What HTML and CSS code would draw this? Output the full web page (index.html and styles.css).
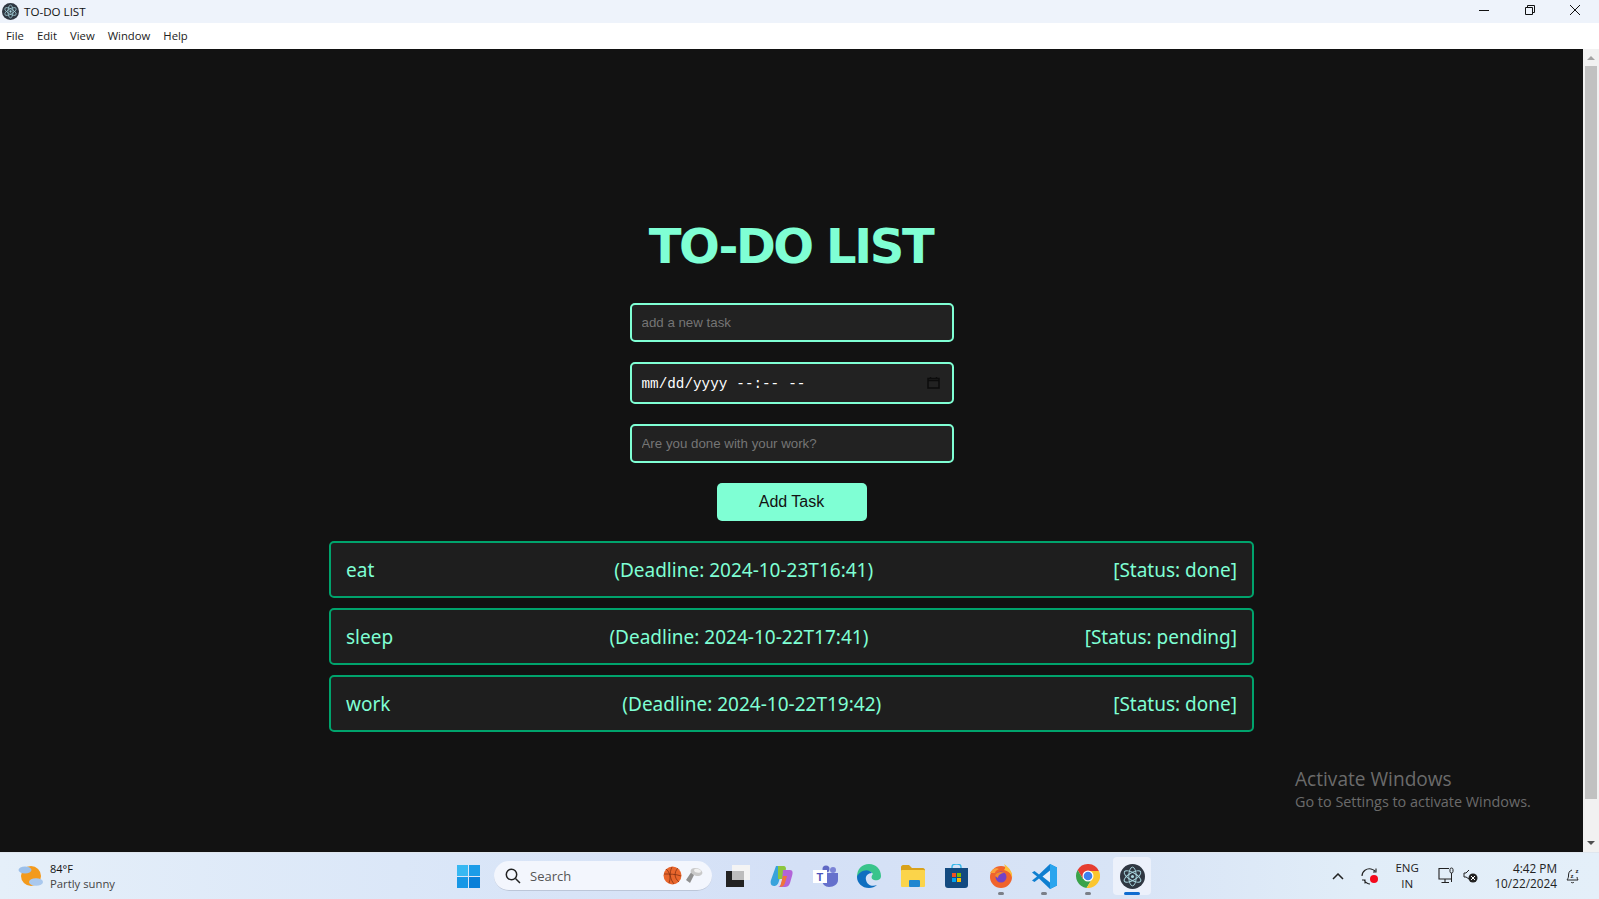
FILE: index.html
```html
<!DOCTYPE html>
<html lang="en">

<head>
    <meta charset="UTF-8">
    <title>TO-DO LIST</title>
    <link rel="stylesheet" href="styles.css">
</head>

<body>
    <div class="title-bar">
        <svg class="app-icon" width="17" height="17" viewBox="0 0 24 24">
            <circle cx="12" cy="12" r="12" fill="#2f3742"/>
            <g fill="none" stroke="#a9d6df" stroke-width="1">
                <ellipse cx="12" cy="12" rx="9" ry="3.6" transform="rotate(30 12 12)"/>
                <ellipse cx="12" cy="12" rx="9" ry="3.6" transform="rotate(90 12 12)"/>
                <ellipse cx="12" cy="12" rx="9" ry="3.6" transform="rotate(150 12 12)"/>
            </g>
            <circle cx="12" cy="12" r="1.6" fill="#a9d6df"/>
        </svg>
        <span class="window-title">TO-DO LIST</span>
        <div class="window-controls">
            <svg width="12" height="12" viewBox="0 0 12 12"><path d="M1 6.500H11" stroke="#111" fill="none"/></svg>
            <svg width="12" height="12" viewBox="0 0 12 12"><path d="M1.500 3.500H8.500V10.500H1.500ZM3.500 3V1.500H10.500V8.500H9" stroke="#111" fill="none"/></svg>
            <svg width="12" height="12" viewBox="0 0 12 12"><path d="M1 1L11 11M11 1L1 11" stroke="#111" fill="none"/></svg>
        </div>
    </div>

    <div class="menu-bar">
        <span>File</span>
        <span>Edit</span>
        <span>View</span>
        <span>Window</span>
        <span>Help</span>
    </div>

    <div class="window-body">
        <main class="content">
            <h1>TO-DO LIST</h1>
            <form class="task-form">
                <input type="text" class="field" placeholder="add a new task">
                <div class="field date-field">
                    <span>mm/dd/yyyy</span>
                    <span>--:--</span>
                    <span>--</span>
                    <svg class="calendar" width="13" height="13" viewBox="0 0 13 13">
                        <path d="M1 2.500H12V12H1ZM1 4.500H12M3.500 1V2.500M9.500 1V2.500" fill="none" stroke="#0c0c0c" stroke-width="1.500"/>
                    </svg>
                </div>
                <input type="text" class="field" placeholder="Are you done with your work?">
                <button type="button" class="add-button">Add Task</button>
            </form>
            <ul class="task-list">
                <li class="task"><span>eat</span><span>(Deadline: 2024-10-23T16:41)</span><span>[Status: done]</span></li>
                <li class="task"><span>sleep</span><span>(Deadline: 2024-10-22T17:41)</span><span>[Status: pending]</span></li>
                <li class="task"><span>work</span><span>(Deadline: 2024-10-22T19:42)</span><span>[Status: done]</span></li>
            </ul>
        </main>

        <div class="scrollbar">
            <div class="arrow-up"></div>
            <div class="thumb"></div>
            <div class="arrow-down"></div>
        </div>

        <div class="activate">
            <div class="activate-title">Activate Windows</div>
            <div class="activate-text">Go to Settings to activate Windows.</div>
        </div>
    </div>

    <footer class="taskbar">
        <div class="weather">
            <svg width="26" height="24" viewBox="0 0 26 24">
                <circle cx="13" cy="12" r="10" fill="#f39a1c"/>
                <ellipse cx="7" cy="6" rx="6.500" ry="3.500" fill="#9cc0ea"/>
                <ellipse cx="18" cy="18" rx="7" ry="3.800" fill="#a9c8ee"/>
            </svg>
            <div class="weather-text">
                <div class="temp">84°F</div>
                <div class="sky">Partly sunny</div>
            </div>
        </div>

        <div class="start-area">
            <svg class="start" width="23" height="23" viewBox="0 0 23 23">
                <rect width="11" height="11" fill="#37b8f2"/>
                <rect x="12" width="11" height="11" fill="#1b9ce8"/>
                <rect y="12" width="11" height="11" fill="#1797e6"/>
                <rect x="12" y="12" width="11" height="11" fill="#0a7fd8"/>
            </svg>
            <div class="search">
                <svg width="16" height="16" viewBox="0 0 16 16"><circle cx="6.500" cy="6.500" r="5.200" fill="none" stroke="#222" stroke-width="1.500"/><path d="M10.500 10.500L15 15" stroke="#222" stroke-width="1.500"/></svg>
                <span class="search-label">Search</span>
                <svg class="ball" width="19" height="19" viewBox="0 0 19 19">
                    <circle cx="9.500" cy="9.500" r="9" fill="#e9662c"/>
                    <path d="M1 8C6 8 13 8 18 10M9 1C6 7 7 13 11 18M3 3C7 6 8 12 6 17M15 2C11 6 11 12 16 16" fill="none" stroke="#7a2c10" stroke-width=".7"/>
                </svg>
                <svg class="buds" width="18" height="17" viewBox="0 0 18 17">
                    <path d="M1 13L7 4L10 6L5 16Z" fill="#8f8f8f"/>
                    <ellipse cx="11.500" cy="5" rx="6" ry="3.800" transform="rotate(15 11.500 5)" fill="#c9c9c9"/>
                    <ellipse cx="12.500" cy="3.800" rx="3.500" ry="1.800" transform="rotate(15 12.500 3.800)" fill="#f0f0f0"/>
                </svg>
            </div>
        </div>

        <div class="apps">
            <div class="app">
                <svg width="24" height="22" viewBox="0 0 24 22">
                    <rect x="6" width="18" height="15" fill="#f4f4f4"/>
                    <rect y="6" width="18" height="16" fill="#222"/>
                    <rect x="6" y="6" width="12" height="9" fill="#bdbdbd"/>
                </svg>
            </div>
            <div class="app">
                <svg width="23" height="23" viewBox="0 0 23 23">
                    <path d="M6 1H13L9 16C8 20 6 21 4 21C1 21 0 18 1 15Z" fill="#38a3dc"/>
                    <path d="M8 1H14C15 1 16 2 16 4L13 14H8Z" fill="#8cc63f"/>
                    <path d="M13 5H20C23 5 23 8 22 11L20 18C19 21 17 22 15 22H7C10 22 11 20 12 16Z" fill="#b264d8"/>
                    <path d="M10 22L13 11H17L15 18C14 21 12 22 10 22Z" fill="#f0753a"/>
                </svg>
            </div>
            <div class="app">
                <svg width="25" height="22" viewBox="0 0 25 22">
                    <circle cx="20" cy="5" r="3" fill="#7b83d6"/>
                    <circle cx="13" cy="4" r="3.500" fill="#5f68c4"/>
                    <path d="M9 8H25V15C25 19 21 22 16 22C12 22 9 19 9 15Z" fill="#6570cc"/>
                    <rect y="5" width="14" height="13" fill="#fff"/>
                    <text class="teams-t" x="3.500" y="15.500">T</text>
                </svg>
            </div>
            <div class="app">
                <svg width="24" height="24" viewBox="0 0 24 24">
                    <path d="M12 0C19 0 24 5 24 12C24 16 20 17 17 16C14 15 14 12 16 10C14 7 10 6 7 8C3 10 1 13 0 13C0 5 5 0 12 0Z" fill="#39c48b"/>
                    <path d="M0 13C0 19 5 24 12 24C15 24 18 23 20 21C15 23 10 21 9 16C8 12 11 9 15 9C12 5 7 6 4 8C1 10 0 12 0 13Z" fill="#0f6fc0"/>
                </svg>
            </div>
            <div class="app">
                <svg width="24" height="22" viewBox="0 0 24 22">
                    <path d="M0 2C0 1 1 0 2 0H8L11 3H22C23 3 24 4 24 5V8H0Z" fill="#d9a21a"/>
                    <rect y="5" width="24" height="17" rx="1" fill="#fbd44a"/>
                    <rect x="8" y="15" width="11" height="7" rx="1" fill="#1f86d0"/>
                </svg>
            </div>
            <div class="app">
                <svg width="23" height="24" viewBox="0 0 23 24">
                    <path d="M7 5V3C7 1 9 0 11 0H12C14 0 16 1 16 3V5" fill="none" stroke="#35b8ea" stroke-width="1.400"/>
                    <path d="M0 4H23V21C23 23 22 24 20 24H3C1 24 0 23 0 21Z" fill="#134a80"/>
                    <rect x="7" y="9" width="4" height="4" fill="#f25022"/>
                    <rect x="12" y="9" width="4" height="4" fill="#7fba00"/>
                    <rect x="7" y="14" width="4" height="4" fill="#00a4ef"/>
                    <rect x="12" y="14" width="4" height="4" fill="#ffb900"/>
                </svg>
            </div>
            <div class="app app-open">
                <svg width="24" height="24" viewBox="0 0 24 24">
                    <circle cx="12" cy="13" r="11" fill="#f0632c"/>
                    <path d="M15 0C21 4 24 9 23 14C22 9 19 7 15 6C17 4 16 2 15 0Z" fill="#fcc03a"/>
                    <path d="M1 9C3 5 7 3 10 5C7 6 6 8 6 9Z" fill="#f9a13a"/>
                    <circle cx="12" cy="13" r="5.500" fill="#7342c6"/>
                    <path d="M6 12C7 8 12 7 16 9C12 9 9 11 9 14Z" fill="#f48b2a"/>
                </svg>
            </div>
            <div class="app app-open">
                <svg width="25" height="25" viewBox="0 0 25 25">
                    <path d="M18 0L25 3.500V21.500L18 25L7 14.500L2.500 18L0 16.500L5 12.500L0 8.500L2.500 7L7 10.500Z" fill="#0f7fd0"/>
                    <path d="M18 6.500L10.500 12.500L18 18.500Z" fill="#e4effb"/>
                    <path d="M18 0L25 3.500V21.500L18 25Z" fill="#2aa5ee"/>
                </svg>
            </div>
            <div class="app app-open">
                <svg width="24" height="24" viewBox="0 0 24 24">
                    <path d="M12 7H22.900A12 12 0 0 0 1.600 6L7 15Z" fill="#e53d30"/>
                    <path d="M1.600 6A12 12 0 0 0 10.500 23.900L16 15H7Z" fill="#3aa34a"/>
                    <path d="M22.900 7H12L16 15L10.500 23.900A12 12 0 0 0 22.900 7Z" fill="#fbc62f"/>
                    <circle cx="12" cy="12" r="5.500" fill="#fff"/>
                    <circle cx="12" cy="12" r="4.300" fill="#3f81ee"/>
                </svg>
            </div>
            <div class="app app-active">
                <svg width="25" height="25" viewBox="0 0 24 24">
                    <circle cx="12" cy="12" r="12" fill="#2f3742"/>
                    <g fill="none" stroke="#a9d6df" stroke-width=".9">
                        <ellipse cx="12" cy="12" rx="9" ry="3.600" transform="rotate(30 12 12)"/>
                        <ellipse cx="12" cy="12" rx="9" ry="3.600" transform="rotate(90 12 12)"/>
                        <ellipse cx="12" cy="12" rx="9" ry="3.600" transform="rotate(150 12 12)"/>
                    </g>
                    <circle cx="12" cy="12" r="1.500" fill="#a9d6df"/>
                </svg>
            </div>
        </div>

        <div class="tray">
            <svg class="tray-chevron" width="12" height="7" viewBox="0 0 12 7"><path d="M1 6L6 1L11 6" fill="none" stroke="#222" stroke-width="1.500"/></svg>
            <svg class="tray-sync" width="19" height="18" viewBox="0 0 19 18">
                <path d="M1 9C1 4 6 1 10 2C12 2.500 13 3 14 4M12 5L15 5L15 1.500M1 13L4 13L4 16.500M3 13C5 16 7 17 9 17" fill="none" stroke="#222" stroke-width="1.100"/>
                <circle cx="13" cy="12" r="4" fill="#f4091c"/>
            </svg>
            <div class="lang">ENG<br>IN</div>
            <svg class="tray-net" width="17" height="18" viewBox="0 0 17 18">
                <path d="M11 1.500H1V12H13M3.500 15.500H11M7 12V15" fill="none" stroke="#222" stroke-width="1.100"/>
                <rect x="12" y="1" width="3" height="5" rx="1.500" fill="none" stroke="#222"/>
                <path d="M13.500 6V15" stroke="#222"/>
            </svg>
            <svg class="tray-sound" width="15" height="14" viewBox="0 0 15 14">
                <path d="M6 1L3 4H1V8H3L6 10" fill="none" stroke="#222"/>
                <circle cx="10" cy="9" r="4.500" fill="#222"/>
                <path d="M8 7L12 11M12 7L8 11" stroke="#fff"/>
            </svg>
            <div class="clock">4:42 PM<br>10/22/2024</div>
            <svg class="tray-bell" width="14" height="16" viewBox="0 0 14 16">
                <path d="M6 2C3 3 2.500 5 2.500 8C2.500 10 1.500 11 1 12H12C11.500 11 11 10 11 9M5 14C5.500 15 7.500 15 8 14" fill="none" stroke="#222"/>
                <text class="bell-z" x="4.500" y="9.500">z</text>
                <text class="bell-z" x="9.500" y="5">z</text>
            </svg>
        </div>
    </footer>
</body>

</html>
```

FILE: styles.css
```css
* {
    box-sizing: border-box;
}

body {
    margin: 0;
    height: 100vh;
    overflow: hidden;
    display: flex;
    flex-direction: column;
    background-color: #121212;
    font-family: 'Open Sans', sans-serif;
}

/* window chrome */
.title-bar {
    height: 23px;
    display: flex;
    align-items: center;
    padding-left: 2px;
    background-color: #eef3fb;
    font-size: 11.600px;
    color: #111;
}

.app-icon {
    margin-right: 5px;
}

.window-controls {
    margin-left: auto;
    display: flex;
    gap: 33.500px;
    padding: 0 18px 3px 0;
}

.menu-bar {
    height: 26px;
    display: flex;
    align-items: center;
    gap: 13px;
    padding: 0 0 2px 6px;
    background-color: #fff;
    font-size: 11.300px;
    color: #222;
}

.window-body {
    flex: 1;
    position: relative;
    display: flex;
    min-height: 0;
}

/* page content */
.content {
    flex: 1;
    display: flex;
    flex-direction: column;
    align-items: center;
    padding-top: 168px;
}

h1 {
    margin: 0 0 27px;
    height: 59px;
    line-height: 59px;
    font-family: 'DejaVu Sans', sans-serif;
    font-size: 48px;
    font-weight: 700;
    letter-spacing: -2.400px;
    color: #7fffd4;
    transform: translateX(-1px);
}

.task-form {
    display: flex;
    flex-direction: column;
    align-items: center;
    gap: 20px;
}

.field {
    width: 324px;
    height: 39px;
    padding: 0 10px;
    border: 2px solid #7fffd4;
    border-radius: 5px;
    outline: none;
    background-color: #222;
    color: #fff;
    font-family: 'Liberation Sans', sans-serif;
    font-size: 13.300px;
}

.date-field {
    height: 42px;
    display: flex;
    align-items: center;
    gap: 9px;
    padding-top: 1px;
    font-family: 'Liberation Mono', monospace;
    font-size: 14.300px;
}

.calendar {
    margin: 0 2px 2px auto;
}

.add-button {
    width: 150px;
    height: 38px;
    border: none;
    border-radius: 5px;
    background-color: #7fffd4;
    color: #121212;
    font-family: 'Liberation Sans', sans-serif;
    font-size: 16px;
}

.task-list {
    width: 925px;
    margin: 20px 0 0;
    padding: 0;
    list-style: none;
    display: flex;
    flex-direction: column;
    gap: 10px;
}

.task {
    height: 57px;
    display: flex;
    justify-content: space-between;
    align-items: center;
    padding: 0 15px;
    border: 2px solid #00a36c;
    border-radius: 5px;
    background-color: #1e1e1e;
    color: #7fffd4;
    font-family: 'Noto Sans', sans-serif;
    font-size: 19px;
}

.scrollbar {
    width: 16px;
    display: flex;
    flex-direction: column;
    align-items: center;
    background-color: #f1f1f1;
}

.arrow-up {
    margin-top: 7px;
    border: 4px solid transparent;
    border-top: none;
    border-bottom: 4px solid #a3a3a3;
}

.thumb {
    width: 12px;
    height: 733px;
    margin-top: 6px;
    background-color: #c1c1c1;
}

.arrow-down {
    margin-top: 42px;
    border: 4px solid transparent;
    border-bottom: none;
    border-top: 4px solid #505050;
}

.activate {
    position: absolute;
    left: 1295px;
    top: 717px;
    color: #6b6b6b;
}

.activate-title {
    font-size: 19.100px;
    line-height: 27px;
}

.activate-text {
    font-size: 14.400px;
    line-height: 18px;
}

/* taskbar */
.taskbar {
    height: 47px;
    display: flex;
    align-items: center;
    background: linear-gradient(90deg, #e5eff9 0%, #dbe7f8 25%, #d4e0f6 50%, #d8e4f6 70%, #e1edf8 85%, #e4eff9 100%);
    border-top: 1px solid #dfe6ee;
    color: #111;
}

.weather {
    width: 457px;
    display: flex;
    align-items: center;
    gap: 6px;
    padding-left: 18px;
}

.temp {
    font-size: 11px;
    line-height: 15px;
}

.sky {
    font-size: 11.300px;
    line-height: 16px;
    color: #444;
}

.start-area {
    display: flex;
    align-items: center;
    gap: 14px;
}

.search {
    width: 218px;
    height: 30px;
    display: flex;
    align-items: center;
    padding-left: 11px;
    border-radius: 15px;
    background-color: #f3f6fd;
    border-bottom: 1px solid #bcc6d8;
    font-size: 13px;
    color: #555;
}

.search-label {
    flex: 1;
    margin-left: 9px;
}

.ball {
    margin-right: 3px;
}

.buds {
    margin-right: 9px;
}

.apps {
    display: flex;
    align-items: center;
    margin-left: 4px;
}

.app {
    width: 43.800px;
    height: 38px;
    position: relative;
    display: flex;
    align-items: center;
    justify-content: center;
    border-radius: 4px;
}

.app-open::after, .app-active::after {
    content: "";
    position: absolute;
    bottom: 0;
    left: 50%;
    width: 6px;
    height: 3px;
    margin-left: -3px;
    border-radius: 2px;
    background-color: #7b7f88;
}

.app-active {
    width: 38px;
    margin-left: 3px;
    background-color: #ecf1fb;
}

.app-active::after {
    width: 16px;
    margin-left: -8px;
    background-color: #0f6cd0;
}

.teams-t {
    font-family: 'Liberation Sans', sans-serif;
    font-size: 11px;
    font-weight: 700;
    fill: #4b53bc;
}

.tray {
    flex: 1;
    display: flex;
    align-items: center;
    font-size: 11.500px;
    color: #222;
    text-align: center;
}

.tray-chevron {
    margin-left: 181px;
}

.tray-sync {
    margin-left: 17px;
}

.lang {
    width: 30px;
    margin-left: 12px;
    line-height: 16px;
}

.tray-net {
    margin-left: 16px;
}

.tray-sound {
    margin-left: 8px;
}

.clock {
    margin-left: auto;
    font-size: 11.800px;
    line-height: 15.500px;
    text-align: right;
}

.tray-bell {
    margin: 0 19px 0 9px;
}

.bell-z {
    font-family: 'Liberation Sans', sans-serif;
    font-size: 6px;
    font-weight: 700;
    fill: #222;
}
```
